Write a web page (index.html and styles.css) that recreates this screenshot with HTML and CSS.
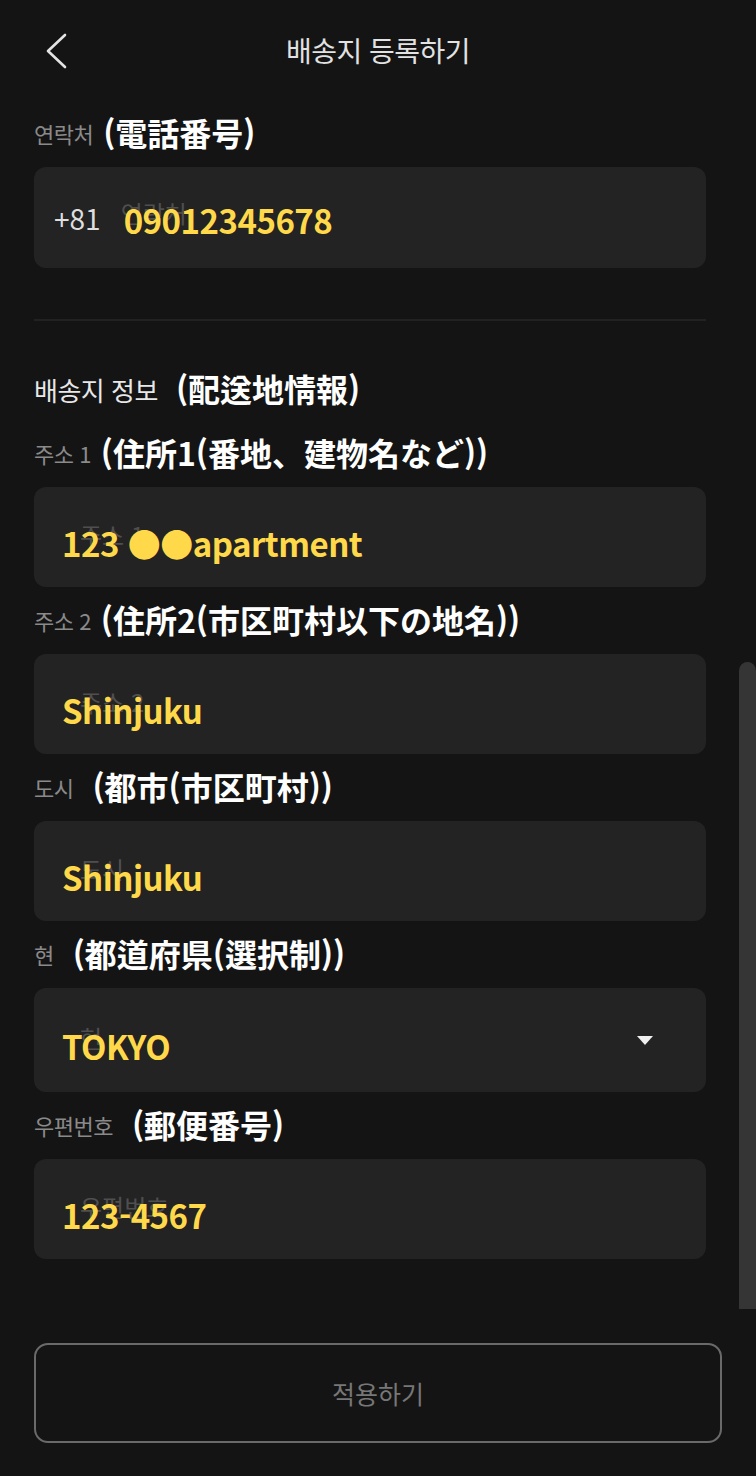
FILE: index.html
```html
<!DOCTYPE html>
<html lang="ko">
  <head>
    <meta charset="UTF-8" />
    <meta name="viewport" content="width=device-width, initial-scale=1.0" />
    <title>배송지 등록하기</title>
    <link rel="stylesheet" href="styles.css">
  </head>
  <body>
    <div class="page">
      <div class="header">
        <button class="back" type="button" aria-label="back">
          <svg viewBox="0 0 24 36" width="24" height="36">
            <polyline points="20,2 3,18 20,34" fill="none" stroke="#e4e4e4" stroke-width="2.6" stroke-linecap="round" stroke-linejoin="round"/>
          </svg>
        </button>
        <div class="title">배송지 등록하기</div>
      </div>

      <div class="form">
        <div class="field">
          <div class="label-row">
            <span class="label">연락처</span>
            <span class="note">(電話番号)</span>
          </div>
          <div class="box phone">
            <span class="code">+81</span>
            <div class="stack">
              <span class="ph">연락처</span>
              <span class="val">09012345678</span>
            </div>
          </div>
        </div>

        <div class="divider"></div>

        <div class="section-row">
          <span class="section">배송지 정보</span>
          <span class="note">(配送地情報)</span>
        </div>

        <div class="field first">
          <div class="label-row">
            <span class="label">주소 1</span>
            <span class="note">(住所1(番地、建物名など))</span>
          </div>
          <div class="box">
            <div class="stack">
              <span class="ph">주소 1</span>
              <span class="val">123 ●●apartment</span>
            </div>
          </div>
        </div>

        <div class="field">
          <div class="label-row">
            <span class="label">주소 2</span>
            <span class="note">(住所2(市区町村以下の地名))</span>
          </div>
          <div class="box">
            <div class="stack">
              <span class="ph">주소 2</span>
              <span class="val">Shinjuku</span>
            </div>
          </div>
        </div>

        <div class="field">
          <div class="label-row wide">
            <span class="label">도시</span>
            <span class="note">(都市(市区町村))</span>
          </div>
          <div class="box">
            <div class="stack">
              <span class="ph">도시</span>
              <span class="val">Shinjuku</span>
            </div>
          </div>
        </div>

        <div class="field">
          <div class="label-row wide">
            <span class="label">현</span>
            <span class="note">(都道府県(選択制))</span>
          </div>
          <div class="box select">
            <div class="stack">
              <span class="ph">현</span>
              <span class="val">TOKYO</span>
            </div>
            <span class="caret"></span>
          </div>
        </div>

        <div class="field">
          <div class="label-row wide">
            <span class="label">우편번호</span>
            <span class="note">(郵便番号)</span>
          </div>
          <div class="box">
            <div class="stack">
              <span class="ph">우편번호</span>
              <span class="val">123-4567</span>
            </div>
          </div>
        </div>
      </div>

      <div class="actions">
        <button class="apply" type="button">적용하기</button>
      </div>

      <div class="scrollbar"></div>
    </div>
  </body>
</html>
```

FILE: styles.css
```css
body {
  margin: 0;
  font-family: "Noto Sans CJK KR", "Noto Sans CJK JP", "Noto Sans", sans-serif;
  background-color: #141414;
  color: #ffffff;
}

.page {
  position: relative;
  height: 1476px;
  overflow: hidden;
}

.header {
  display: flex;
  align-items: center;
  justify-content: center;
  height: 100px;
  position: relative;
}

.back {
  position: absolute;
  left: 45px;
  top: 33px;
  padding: 0;
  border: none;
  background: none;
  cursor: pointer;
}

.title {
  font-size: 28px;
  color: #e2e2e2;
  letter-spacing: -0.5px;
}

.form {
  display: flex;
  flex-direction: column;
  padding: 15px 50px 0 34px;
}

.field {
  display: flex;
  flex-direction: column;
  margin-bottom: 15px;
}

.field.first {
  margin-top: 28px;
}

.label-row,
.section-row {
  display: flex;
  align-items: center;
  gap: 10px;
  height: 36px;
  margin-bottom: 16px;
}

.label-row.wide {
  gap: 19px;
}

.section-row {
  gap: 18px;
  margin-top: 50px;
  margin-bottom: 0;
}

.label {
  font-size: 22px;
  color: #8a8a8a;
  letter-spacing: -0.5px;
}

.section {
  font-size: 26px;
  color: #e8e8e8;
  letter-spacing: -0.5px;
}

.note {
  font-family: "Noto Sans CJK JP", sans-serif;
  font-size: 32px;
  font-weight: bold;
  color: #ffffff;
  line-height: 1.1;
}

.box {
  display: flex;
  align-items: center;
  height: 100px;
  padding: 0 28px;
  background-color: #232323;
  border-radius: 12px;
}

.box.phone {
  padding-left: 20px;
  height: 101px;
}

.box.select {
  height: 104px;
  padding-right: 53px;
}

.code {
  font-size: 28px;
  color: #dedede;
  margin-right: 20px;
}

.stack {
  display: grid;
  align-items: center;
  flex: 1;
}

.stack > span {
  grid-area: 1 / 1;
}

.ph {
  font-size: 24px;
  color: #4f4f4f;
  margin-left: 18px;
  margin-bottom: 6px;
}

.phone .ph {
  margin-left: 0;
  margin-bottom: 10px;
}

.val {
  font-family: "Noto Sans CJK JP", sans-serif;
  font-size: 33px;
  font-weight: bold;
  color: #ffd94a;
  margin-top: 12px;
  letter-spacing: -0.5px;
}

.phone .val {
  margin-left: 3px;
  margin-top: 4px;
}

.caret {
  width: 0;
  height: 0;
  border-left: 8px solid transparent;
  border-right: 8px solid transparent;
  border-top: 9px solid #f0f0f0;
}

.divider {
  height: 2px;
  margin-top: 36px;
  background-color: #222222;
}

.actions {
  padding: 69px 34px 0 34px;
}

.apply {
  width: 100%;
  height: 100px;
  border: 2px solid #6a6a6a;
  border-radius: 14px;
  background: none;
  color: #777777;
  font-family: "Noto Sans CJK KR", sans-serif;
  font-size: 25px;
  cursor: pointer;
}

.scrollbar {
  position: absolute;
  right: 0;
  top: 662px;
  width: 17px;
  height: 647px;
  background-color: #353535;
  border-radius: 9px 9px 0 0;
}
```
